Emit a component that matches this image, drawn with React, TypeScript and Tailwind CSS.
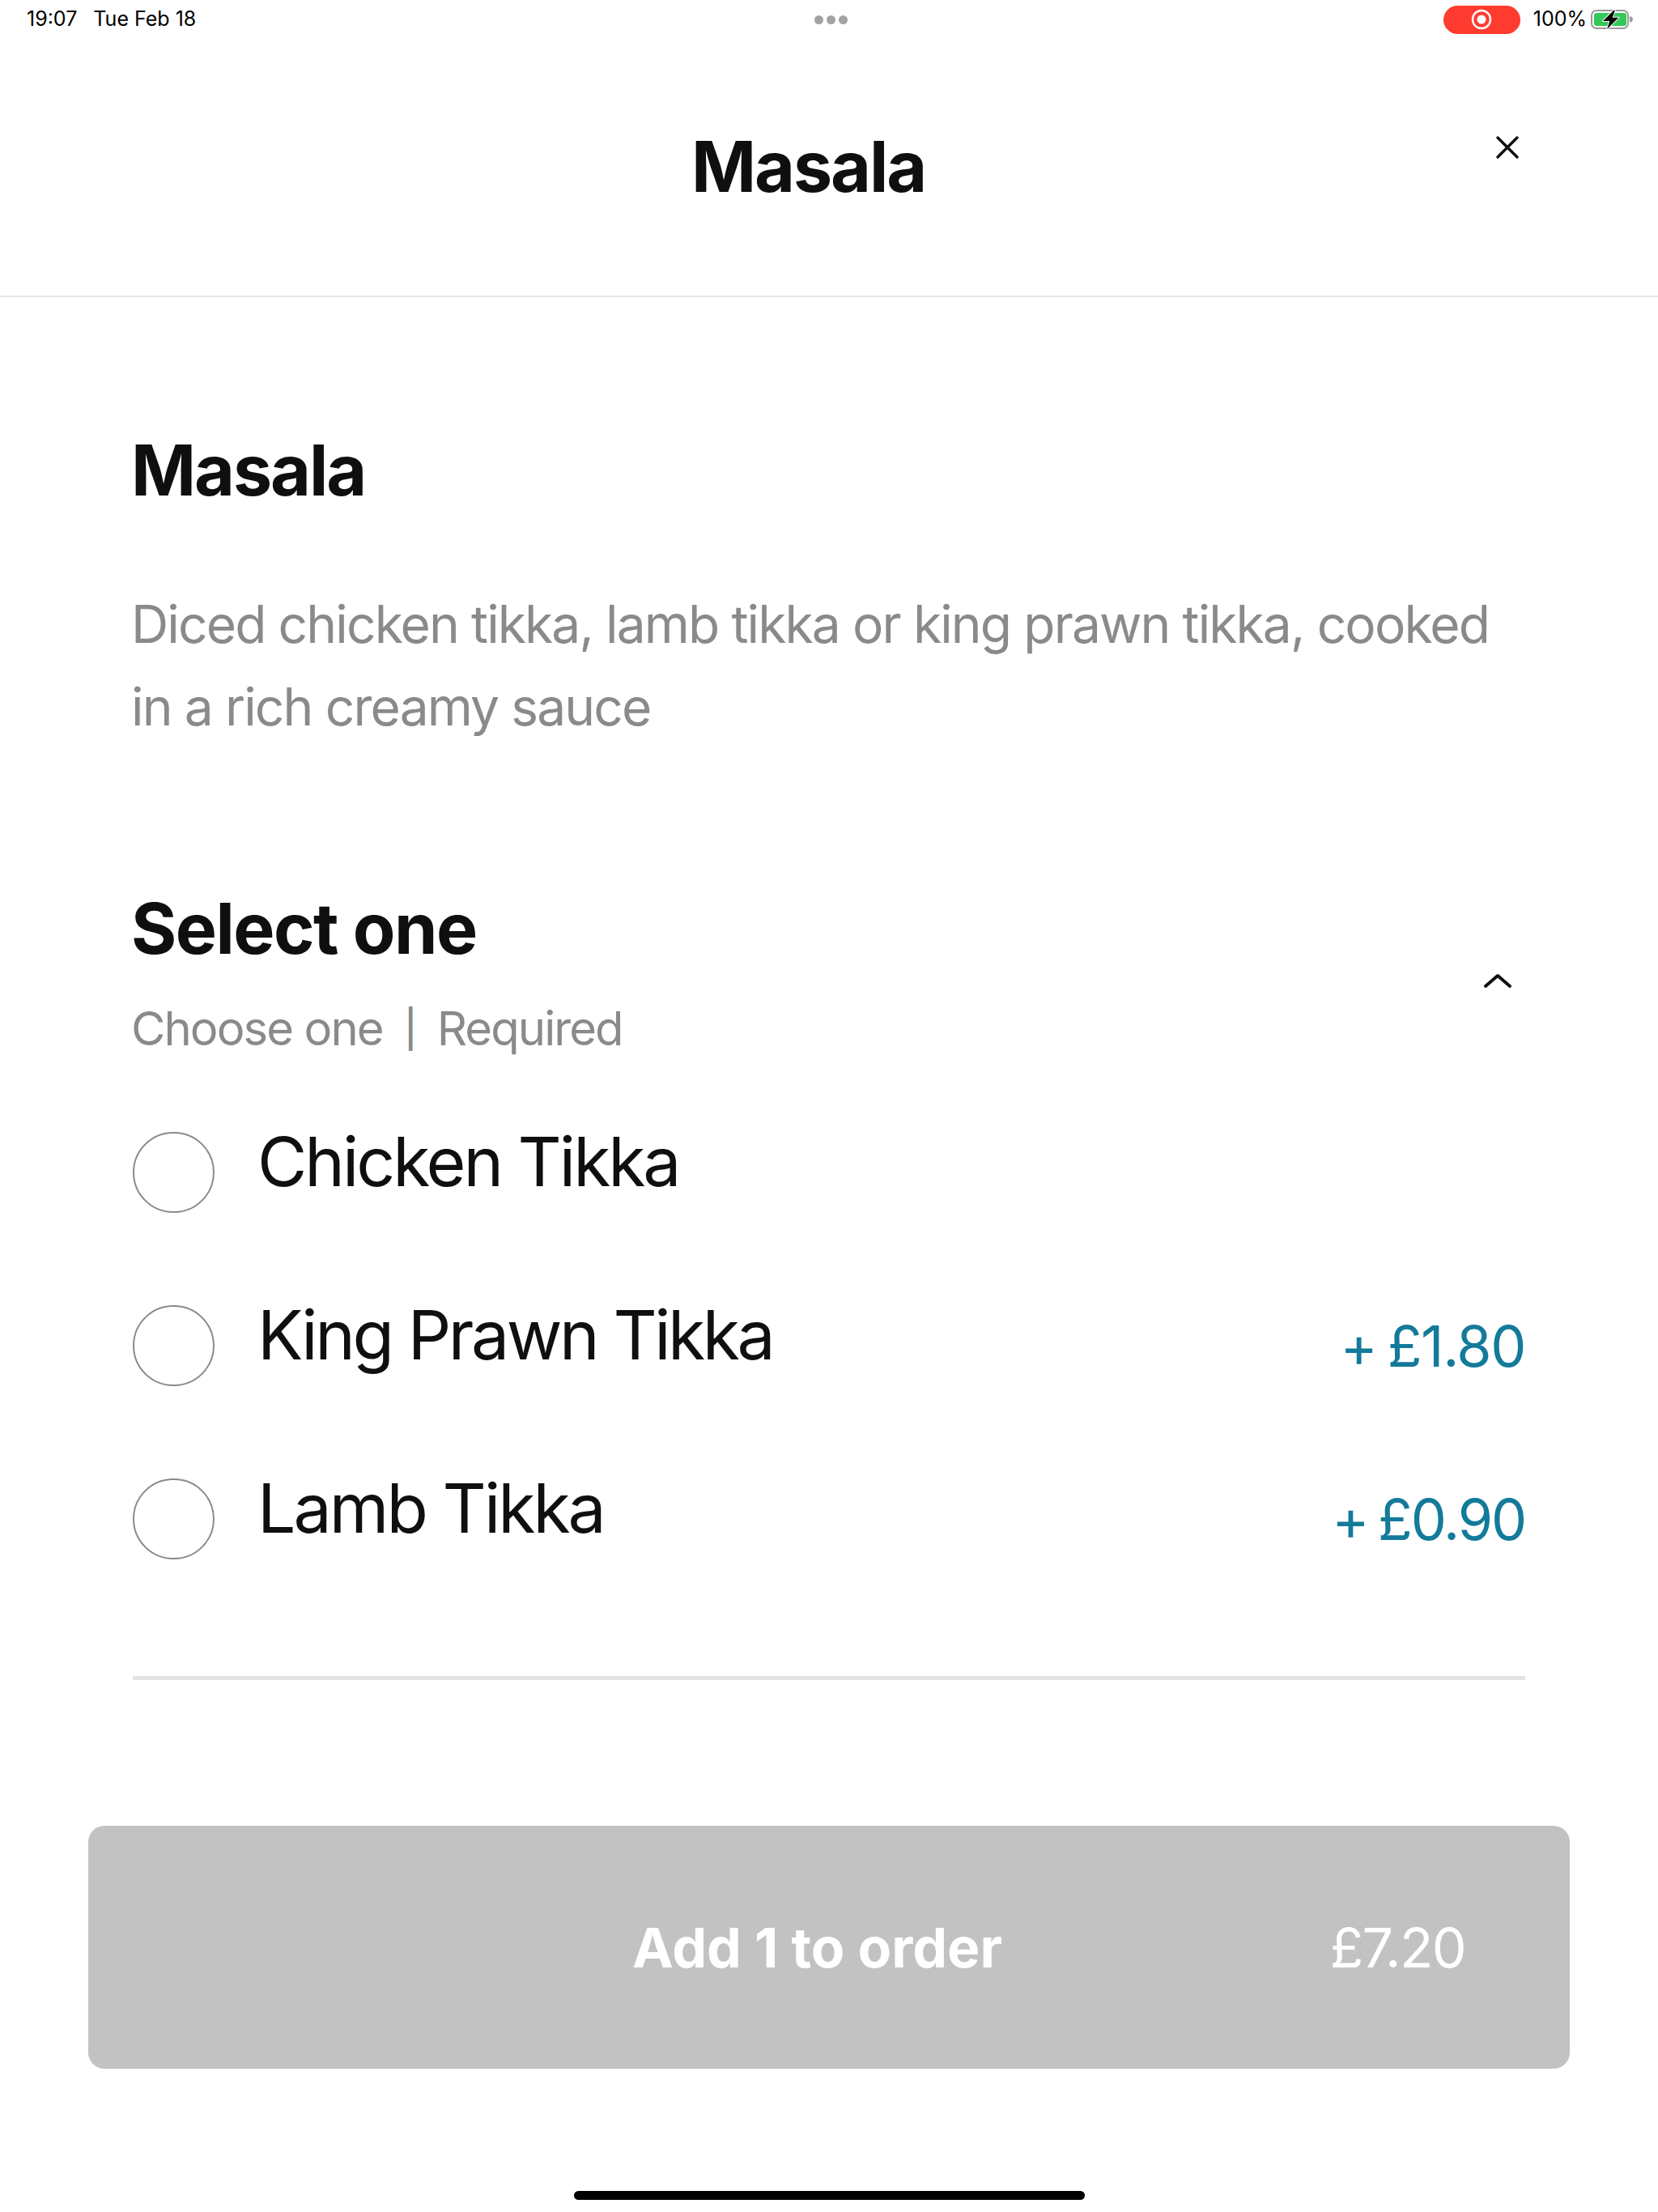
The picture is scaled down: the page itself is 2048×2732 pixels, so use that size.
function Radio() {
  return <div className="w-[101px] h-[100px] rounded-full border-2 border-[#8a8a8a] shrink-0" />;
}

function Option({ label, labelClass, price, priceClass }: { label: string; labelClass: string; price?: string; priceClass?: string }) {
  return (
    <div className="flex items-start h-[214px]">
      <Radio />
      <div className={`ml-[53px] -mt-[5px] text-[84px] leading-[84px] text-[#0f0f0f] ${labelClass}`}>{label}</div>
      {price && <div className={`ml-auto mt-[16px] text-[70px] leading-[70px] [word-spacing:-5px] text-[#147a9a] ${priceClass}`}>{price}</div>}
    </div>
  );
}

export default function App() {
  return (
    <div className="w-[2048px] h-[2732px] bg-white flex flex-col overflow-hidden font-['Inter',sans-serif] text-[#0f0f0f]">
      <div className="h-[48px] grid grid-cols-3 items-center pl-[33px] pr-[28px] text-[25px] text-black">
        <div className="flex gap-[20px]"><span>19:07</span><span>Tue Feb 18</span></div>
        <div className="flex justify-center gap-[4px]">
          <span className="w-[11px] h-[11px] rounded-full bg-[#a3a3a3]" />
          <span className="w-[11px] h-[11px] rounded-full bg-[#a3a3a3]" />
          <span className="w-[11px] h-[11px] rounded-full bg-[#a3a3a3]" />
        </div>
        <div className="flex items-center justify-end">
          <div className="w-[95px] h-[35px] rounded-full bg-[#ff3b30] flex items-center justify-center">
            <svg width="26" height="26" viewBox="0 0 26 26"><circle cx="13" cy="13" r="11" fill="none" stroke="#fff" strokeWidth="2.4" /><circle cx="13" cy="13" r="5.5" fill="#fff" /></svg>
          </div>
          <span className="ml-[16px] text-[25px]">100%</span>
          <svg className="ml-[4px]" width="56" height="28" viewBox="0 0 56 28">
            <rect x="2" y="3" width="45" height="22" rx="6" fill="none" stroke="#9a9a9a" strokeWidth="2" />
            <rect x="5" y="6" width="40" height="16" rx="3" fill="#34c759" />
            <path d="M49 10c2.500 .6 4 2.200 4 4s-1.500 3.400-4 4z" fill="#9a9a9a" />
            <path d="M29.300 2.700 16 16h8.300L21 26l14.300-14.300h-7.600L31 2.700z" fill="#000" stroke="#fff" strokeWidth="2" strokeLinejoin="round" paintOrder="stroke" />
          </svg>
        </div>
      </div>

      <div className="h-[319px] border-b-2 border-[#e5e5e5] flex items-start">
        <h1 className="ml-[854px] mt-[112px] text-[86px] leading-[92px] font-bold tracking-[-0.024em]">Masala</h1>
        <svg className="ml-auto mr-[170px] mt-[118px]" width="32" height="32" viewBox="0 0 32 32" fill="none" stroke="#0f0f0f" strokeWidth="3.5" strokeLinecap="round"><path d="M4 4l24 24M28 4L4 28" /></svg>
      </div>

      <div className="flex-1 flex flex-col pl-[164px] pr-[164px]">
        <h2 className="-ml-[2px] mt-[168px] text-[86px] leading-[92px] font-bold tracking-[-0.024em]">Masala</h2>
        <p className="-ml-[2px] mt-[93px] text-[64px] leading-[102px] tracking-[-0.029em] text-[#8a8a8a]">Diced chicken tikka, lamb tikka or king prawn tikka, cooked<br />in a rich creamy sauce</p>

        <div className="mt-[177px] flex items-start justify-between">
          <div>
            <h3 className="-ml-[2px] text-[86px] leading-[92px] font-bold tracking-[-0.018em]">Select one</h3>
            <div className="-ml-[2px] mt-[42px] text-[58px] leading-[70px] tracking-[-0.033em] text-[#8a8a8a] flex items-center gap-[26.5px]"><span>Choose one</span><span className="text-[46px] font-medium">|</span><span>Required</span></div>
          </div>
          <svg className="mt-[99px] mr-[16px]" width="36" height="22" viewBox="0 0 36 22" fill="none" stroke="#0f0f0f" strokeWidth="4" strokeLinecap="round" strokeLinejoin="round"><path d="M3 18 18 5l15 13" /></svg>
        </div>

        <div className="mt-[93px]">
          <Option label="Chicken Tikka" labelClass="tracking-[-0.036em]" />
          <Option label="King Prawn Tikka" labelClass="tracking-[-0.041em]" price="+ £1.80" priceClass="tracking-[-0.02em]" />
          <Option label="Lamb Tikka" labelClass="tracking-[-0.035em]" price="+ £0.90" priceClass="tracking-[-0.03em]" />
        </div>

        <div className="h-[5px] bg-[#e3e3e3] mt-[30px]" />
      </div>

      <div className="mx-[109px] h-[300px] rounded-[20px] bg-[#c2c2c2] flex items-center text-white text-[68px]">
        <span className="ml-[672px] font-bold">Add 1 to order</span>
        <span className="ml-auto mr-[129px] tracking-[-0.024em]">£7.20</span>
      </div>

      <div className="mt-[151px] mb-[15px] mx-auto w-[631px] h-[11px] rounded-full bg-black" />
    </div>
  );
}
